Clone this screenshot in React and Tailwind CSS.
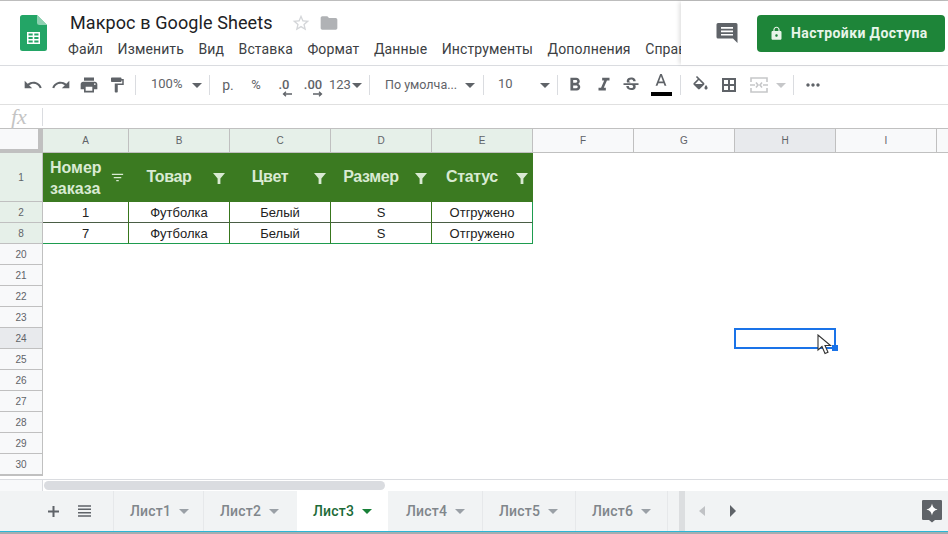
import {
  MdUndo, MdRedo, MdPrint, MdFormatPaint, MdFormatBold, MdFormatItalic, MdStrikethroughS,
  MdMoreHoriz, MdLock, MdFilterList, MdStarBorder, MdFolder,
} from 'react-icons/md';

const menu = ['Файл', 'Изменить', 'Вид', 'Вставка', 'Формат', 'Данные', 'Инструменты', 'Дополнения', 'Справка'];
const cols = ['A', 'B', 'C', 'D', 'E', 'F', 'G', 'H', 'I', 'J'];
const headers = ['Товар', 'Цвет', 'Размер', 'Статус'];
const dataRows = [
  { n: 2, cells: ['1', 'Футболка', 'Белый', 'S', 'Отгружено'] },
  { n: 8, cells: ['7', 'Футболка', 'Белый', 'S', 'Отгружено'] },
];
const emptyRows = [20, 21, 22, 23, 24, 25, 26, 27, 28, 29, 30, ''];
const tabs = [
  { name: 'Лист1', cls: 'w-[90px] border-l border-[#e6e8ea] pl-[16px] text-[#80868b]' },
  { name: 'Лист2', cls: 'w-[92px] border-l border-[#e6e8ea] pl-[16px] text-[#80868b]' },
  { name: 'Лист3', active: true, cls: 'ml-[2px] w-[91px] bg-white pl-[16px] text-[#1c6b38]' },
  { name: 'Лист4', cls: 'w-[94px] pl-[18px] text-[#80868b]' },
  { name: 'Лист5', cls: 'w-[93px] border-l border-[#e6e8ea] pl-[16px] text-[#80868b]' },
  { name: 'Лист6', cls: 'w-[93px] border-x border-[#e6e8ea] pl-[16px] text-[#80868b]' },
];

const Caret = ({ className = 'border-t-[#5f6368]' }) => (
  <span className={'inline-block h-0 w-0 border-x-[5px] border-t-[5px] border-x-transparent ' + className} />
);

const Sep = ({ className = '' }) => <div className={'h-[20px] w-px bg-[#dadce0] ' + className} />;

const Tool = ({ children, className = '' }) => (
  <div className={'flex h-[28px] w-[28px] items-center justify-center text-[#5f6368] ' + className}>{children}</div>
);

const Funnel = () => (
  <svg width="12" height="12" viewBox="0 0 12 12" className="shrink-0">
    <path d="M0 1h12L7.4 6.6V12H4.6V6.6z" fill="#d9ead3" />
  </svg>
);

const Logo = () => (
  <svg width="27" height="36" viewBox="0 0 27 36">
    <path d="M2.5 0H17l10 10v23.500a2.500 2.500 0 0 1-2.500 2.500h-22A2.500 2.500 0 0 1 0 33.500v-31A2.500 2.500 0 0 1 2.500 0z" fill="#23a566" />
    <path d="M17 0l10 10h-7.500A2.500 2.500 0 0 1 17 7.500z" fill="#8ed1b1" />
    <path d="M7 17h13v12H7zm1.500 1.500v2h4.200v-2zm5.800 0v2h4.200v-2zm-5.800 3.500v2h4.200v-2zm5.800 0v2h4.200v-2zm-5.800 3.500v2h4.200v-2zm5.800 0v2h4.200v-2z" fill="#fff" fillRule="evenodd" />
  </svg>
);

const Header = () => (
  <div className="flex h-[65px] border-b border-[#dadce0]">
    <div className="flex w-[681px] shrink-0 overflow-hidden">
      <div className="w-[68px] shrink-0 pl-[20px] pt-[14px]">
        <Logo />
      </div>
      <div className="min-w-0 flex-1">
        <div className="flex h-[25px] items-center pl-[2px] pt-[19px]">
          <span className="whitespace-nowrap font-['Roboto',sans-serif] text-[18px] leading-none tracking-[0.1px] text-[#202124]">Макрос в Google Sheets</span>
          <MdStarBorder size={20} className="ml-[18px] text-[#d4d6d9]" />
          <MdFolder size={20} className="ml-[8px] text-[#b0b2b5]" />
        </div>
        <div className="mt-[13px] flex gap-[14.500px] whitespace-nowrap font-['Roboto',sans-serif] text-[14px] leading-[20px] tracking-[0.12px] text-[#3c4043]">
          {menu.map((m) => <span key={m}>{m}</span>)}
        </div>
      </div>
    </div>
    <div className="z-10 flex flex-1 items-start bg-white pt-[14px] shadow-[-3px_0_4px_-1px_rgba(0,0,0,0.12)]">
      <svg width="24" height="24" viewBox="0 0 24 24" className="ml-[34px] mt-[6px]">
        <path d="M3 2h18a1.500 1.500 0 0 1 1.500 1.500V22L18 17.500H3A1.500 1.500 0 0 1 1.500 16V3.500A1.500 1.500 0 0 1 3 2zm3 4v1.800h12V6zm0 3.500v1.800h12V9.500zM6 13v1.500h12V13z" fill="#5f6368" fillRule="evenodd" />
      </svg>
      <div className="ml-[18px] flex h-[37px] w-[188px] items-center rounded-[4px] bg-[#1e8539] pl-[12px] font-['Roboto',sans-serif] text-[14px] font-bold tracking-[0.38px] text-[#e8f5e9]">
        <MdLock size={15} />
        <span className="ml-[7px] whitespace-nowrap">Настройки Доступа</span>
      </div>
    </div>
  </div>
);

const Toolbar = () => (
  <div className="flex h-[39px] items-center border-b border-[#e0e0e0] pl-[19px] font-['Roboto',sans-serif] text-[#5f6368]">
    <Tool><MdUndo size={20} /></Tool>
    <Tool><MdRedo size={20} /></Tool>
    <Tool><MdPrint size={20} /></Tool>
    <Tool><MdFormatPaint size={18} /></Tool>
    <Sep className="ml-[4px]" />
    <div className="flex w-[73px] items-center pl-[15px] text-[13px]">
      <span className="w-[41px] pb-[2px]">100%</span>
      <Caret />
    </div>
    <Sep />
    <Tool className="ml-[4px] text-[14px]">р.</Tool>
    <Tool className="text-[13px]">%</Tool>
    <Tool className="flex-col pt-[5px] text-[13px] font-medium leading-[13px]">
      <span>.0</span>
      <svg width="10" height="6" viewBox="0 0 10 6" className="ml-[6px]">
        <path d="M10 3H2M4 .8L1.500 3 4 5.200" fill="none" stroke="#5f6368" strokeWidth="1.300" />
      </svg>
    </Tool>
    <Tool className="ml-[1px] flex-col pt-[5px] text-[13px] font-medium leading-[13px]">
      <span>.00</span>
      <svg width="10" height="6" viewBox="0 0 10 6" className="ml-[9px]">
        <path d="M0 3h8M6 .8L8.500 3 6 5.200" fill="none" stroke="#5f6368" strokeWidth="1.300" />
      </svg>
    </Tool>
    <div className="ml-[2px] flex w-[38px] items-center text-[13px]">
      <span>123</span>
      <Caret className="ml-[1px] border-t-[#5f6368]" />
    </div>
    <Sep className="ml-[2px]" />
    <div className="flex w-[113px] items-center pl-[15px] text-[12.500px]">
      <span className="w-[80px] whitespace-nowrap">По умолча...</span>
      <Caret />
    </div>
    <Sep />
    <div className="flex w-[73px] items-center pl-[14px] text-[13px]">
      <span className="w-[42px] pb-[2px]">10</span>
      <Caret />
    </div>
    <Sep />
    <Tool className="ml-[3px]"><MdFormatBold size={22} /></Tool>
    <Tool className="ml-[1px]"><MdFormatItalic size={22} /></Tool>
    <Tool className="-ml-[1px]"><MdStrikethroughS size={20} /></Tool>
    <div className="ml-[2px] flex h-[30px] w-[28px] flex-col items-center pt-[1px]">
      <svg width="20" height="21" viewBox="0 0 24 24">
        <path d="M11 3L5.500 17h2.250l1.120-3h6.250l1.120 3h2.250L13 3h-2zm-1.380 9L12 5.670 14.380 12H9.620z" fill="#5f6368" />
      </svg>
      <div className="h-[4px] w-[21px] bg-black" />
    </div>
    <Sep className="ml-[5px]" />
    <Tool className="ml-[5px]">
      <svg width="19" height="19" viewBox="0 0 24 24">
        <path d="M16.560 8.940L7.620 0 6.210 1.410l2.380 2.380-5.150 5.150c-.59.59-.59 1.540 0 2.120l5.500 5.500c.29.29.68.44 1.060.44s.77-.15 1.060-.44l5.500-5.500c.59-.58.59-1.530 0-2.120zM5.210 10L10 5.210 14.790 10H5.210zM19 11.500s-2 2.170-2 3.500c0 1.100.9 2 2 2s2-.9 2-2c0-1.330-2-3.500-2-3.500z" fill="#5f6368" />
      </svg>
    </Tool>
    <Tool className="ml-[1px]">
      <svg width="14" height="14" viewBox="0 0 14 14" fill="none" stroke="#5f6368" strokeWidth="2">
        <path d="M1 1h12v12H1zM7 1v12M1 7h12" />
      </svg>
    </Tool>
    <Tool className="ml-[2px]">
      <svg width="18" height="16" viewBox="0 0 18 16" fill="none" stroke="#c6c7c9" strokeWidth="1.600">
        <path d="M1 5V1h16v4M1 11v4h16v-4M0 8h5M13 8h5" />
        <path d="M6 5.500L8 8l-2 2.500M12 5.500L10 8l2 2.500" />
      </svg>
    </Tool>
    <Caret className="ml-[3px] border-t-[#c6c7c9]" />
    <Sep className="ml-[7px]" />
    <Tool className="ml-[5px]"><MdMoreHoriz size={20} /></Tool>
  </div>
);

const FormulaBar = () => (
  <div className="flex h-[24px] items-center border-b border-[#c0c0c0]">
    <span className="w-[42px] pl-[11px] font-['Liberation_Serif',serif] text-[22px] italic leading-none text-[#c4c4c4]">fx</span>
    <div className="h-[18px] w-px bg-[#dadce0]" />
  </div>
);

const ColHead = ({ c, i }) => {
  const tone = i < 5 ? 'bg-[#e6f0e9]' : c === 'H' ? 'bg-[#e8eaed]' : 'bg-[#f8f9fa]';
  return (
    <div className={'flex items-center justify-center border-r border-b border-[#c0c0c0] text-[10px] text-[#5f6368] ' + tone}>
      {c}
    </div>
  );
};

const RowHead = ({ n, active, picked }) => {
  const tone = picked ? 'bg-[#e6f0e9]' : active ? 'bg-[#e8eaed]' : 'bg-[#f8f9fa]';
  return (
    <div className={'flex items-center justify-center border-r border-b border-[#c0c0c0] text-[10px] text-[#5f6368] ' + tone}>
      {n}
    </div>
  );
};

const Grid = () => (
  <div className="relative h-[351px] overflow-hidden border-b border-[#dadce0] font-['Liberation_Sans',sans-serif]">
    <div className="grid w-[1038px] grid-cols-[43px_86px_repeat(9,101px)] grid-rows-[24px_49px_repeat(13,21px)]">
      <div className="border-r-[5px] border-b-[4px] border-[#c0c0c0] bg-[#f8f9fa]" />
      {cols.map((c, i) => <ColHead key={c} c={c} i={i} />)}

      <RowHead n={1} picked />
      <div className="flex items-center bg-[#3b7a21] pl-[7px] text-[16px] font-bold leading-[21px] text-[#d9ead3]">
        <span className="w-[61px]">Номер заказа</span>
        <MdFilterList size={15} className="-ml-[1px]" />
      </div>
      {headers.map((h) => (
        <div key={h} className="flex items-center bg-[#3b7a21] pr-[5px] text-[16px] font-bold tracking-[-0.35px] text-[#d9ead3]">
          <span className="flex-1 pb-[2px] pr-[4px] text-center">{h}</span>
          <Funnel />
        </div>
      ))}
      {cols.slice(5).map((c) => <div key={c} />)}

      {dataRows.map((r, ri) => (
        <div key={r.n} className="contents">
          <RowHead n={r.n} picked />
          {r.cells.map((v, i) => (
            <div key={i} className={'flex items-center justify-center border-r border-[#38761d] pt-px text-[13px] text-[#222] ' + (ri === 1 ? 'border-b border-b-[#1e9c4f]' : 'border-b border-b-[#4a5d45]') + (i === 4 ? ' border-r-[#1e9c4f]' : '')}>
              {v}
            </div>
          ))}
          {cols.slice(5).map((c) => <div key={c} />)}
        </div>
      ))}

      {emptyRows.map((n, idx) => (
        <div key={idx} className="contents">
          <RowHead n={n} active={n === 24} />
          {cols.map((c) => <div key={c} />)}
        </div>
      ))}
    </div>

    <div className="absolute left-[734px] top-[199px] h-[21px] w-[102px] border-2 border-[#1a73e8]" />
    <div className="absolute left-[832px] top-[216px] h-[6px] w-[6px] bg-[#1a73e8]" />
    <svg width="18" height="22" viewBox="0 0 18 22" className="absolute left-[817px] top-[205px]">
      <path d="M1 1v15l4-3.500 3 7 3-1.300-3-6.700h5.500z" fill="#fff" stroke="#333" strokeWidth="1.100" />
    </svg>
  </div>
);

const ScrollStrip = () => (
  <div className="flex h-[11px] bg-white">
    <div className="w-[43px] border-r border-[#dadce0] bg-[#f8f9fa]" />
    <div className="ml-px mt-px h-[9px] w-[341px] rounded-full bg-[#dadce0]" />
  </div>
);

const TabBar = () => (
  <div className="flex h-[40px] items-center bg-[#f1f3f4] font-['Roboto',sans-serif] text-[#5f6368]">
    <div className="flex h-full w-[113px] shrink-0 items-center pl-[48px]">
      <svg width="11" height="11" viewBox="0 0 11 11">
        <path d="M5.500 0v11M0 5.500h11" stroke="#5f6368" strokeWidth="2" />
      </svg>
      <svg width="13" height="12" viewBox="0 0 13 12" className="ml-[19px]">
        <path d="M0 1h13M0 4.300h13M0 7.700h13M0 11h13" stroke="#5f6368" strokeWidth="1.500" />
      </svg>
    </div>
    {tabs.map((t) => (
      <div key={t.name} className={'flex h-full shrink-0 items-center text-[14px] font-medium tracking-[0.2px] ' + t.cls}>
        <span className="w-[46px]">{t.name}</span>
        <Caret className={(t.active ? 'border-t-[#188038]' : 'border-t-[#9aa0a6]') + ' ml-[3px] border-x-[4px] border-t-[4px]'} />
      </div>
    ))}
    <div className="ml-[11px] h-full w-[6px] shrink-0 bg-[#dcdee0]" />
    <span className="ml-[14px] inline-block h-0 w-0 border-y-[5px] border-r-[6px] border-y-transparent border-r-[#c0c2c5]" />
    <span className="ml-[25px] inline-block h-0 w-0 border-y-[6px] border-l-[6px] border-y-transparent border-l-[#5f6368]" />
    <div className="ml-auto mr-[5px]">
      <svg width="22" height="24" viewBox="0 0 22 24">
        <path d="M2 1h18a1.500 1.500 0 0 1 1 1v18a1.500 1.500 0 0 1-1 1h-6l-3 2.500L8 21H2a1.500 1.500 0 0 1-1-1V2a1.500 1.500 0 0 1 1-1z" fill="#5f6368" />
        <path d="M11 4.500c.8 3.600 2 5 5.500 6-3.500 1-4.700 2.400-5.500 6-.8-3.600-2-5-5.500-6 3.500-1 4.700-2.400 5.500-6z" fill="#fff" />
      </svg>
    </div>
  </div>
);

export default function App() {
  return (
    <div className="h-[534px] w-[948px] overflow-hidden bg-white">
      <div className="h-px bg-[#bdbdbd]" />
      <Header />
      <Toolbar />
      <FormulaBar />
      <Grid />
      <ScrollStrip />
      <TabBar />
      <div className="h-px bg-[#2bb6d6]" />
      <div className="h-[2px] bg-[#a7adb0]" />
    </div>
  );
}
